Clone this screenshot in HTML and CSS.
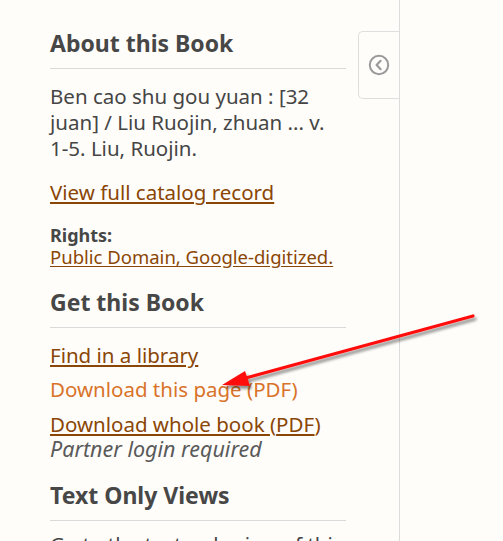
FILE: index.html
```html
<!DOCTYPE html>
<html>
<head>
<meta charset="utf-8">
<link rel="stylesheet" href="styles.css">
</head>
<body>
<div class="page">
  <aside class="sidebar">
    <div class="panel">
      <h2 class="heading">About this Book</h2>
      <p class="desc">Ben cao shu gou yuan : [32 juan] / Liu Ruojin, zhuan ... v. 1-5. Liu, Ruojin.</p>
      <p class="catalog"><a class="link" href="#">View full catalog record</a></p>
      <div class="rights">
        <div class="label">Rights:</div>
        <a class="link small" href="#">Public Domain, Google-digitized.</a>
      </div>
      <h2 class="heading">Get this Book</h2>
      <ul class="items">
        <li><a class="link" href="#">Find in a library</a></li>
        <li><a class="link active" href="#">Download this page (PDF)</a></li>
        <li><a class="link" href="#">Download whole book </a><span class="paren">(</span><a class="link" href="#">PDF</a><span class="paren">)</span>
          <div class="note">Partner login required</div></li>
      </ul>
      <h2 class="heading">Text Only Views</h2>
      <p class="desc views">Go to the text-only view of this item.</p>
    </div>
    <button class="toggle" type="button" aria-label="Collapse sidebar">
      <svg width="22" height="22" viewBox="0 0 22 22">
        <circle cx="11" cy="11" r="9.2" fill="none" stroke="#9a9a9a" stroke-width="2"/>
        <path d="M12.6 6.8 L8.6 11 L12.6 15.2" fill="none" stroke="#9a9a9a" stroke-width="2.2" stroke-linecap="round" stroke-linejoin="round"/>
      </svg>
    </button>
  </aside>
  <main class="main"></main>
  <svg class="arrow" width="503" height="541" viewBox="0 0 503 541">
    <defs>
      <filter id="sh" x="-10%" y="-10%" width="120%" height="130%">
        <feGaussianBlur in="SourceAlpha" stdDeviation="1.6"/>
        <feOffset dx="2" dy="3" result="b"/>
        <feComponentTransfer><feFuncA type="linear" slope="0.45"/></feComponentTransfer>
        <feMerge><feMergeNode/><feMergeNode in="SourceGraphic"/></feMerge>
      </filter>
    </defs>
    <g filter="url(#sh)">
      <line x1="473" y1="316" x2="242" y2="379" stroke="#ff1010" stroke-width="3.2" stroke-linecap="round"/>
      <path d="M222 385 L245 371 L250 386 Z" fill="#ff1010"/>
    </g>
  </svg>
</div>
</body>
</html>
```

FILE: styles.css
```css
html, body {
  margin: 0;
  padding: 0;
  background: #fefdfa;
}
body {
  font-family: "Noto Sans", "Open Sans", sans-serif;
  color: #444;
  width: 503px;
  height: 541px;
  overflow: hidden;
}
.page {
  position: relative;
  display: flex;
  height: 541px;
}
.sidebar {
  width: 349px;
  padding-left: 50px;
  border-right: 1px solid #dcdcdc;
  display: flex;
  align-items: flex-start;
  flex-shrink: 0;
}
.panel {
  width: 296px;
  padding-top: 28px;
}
.heading {
  margin: 0;
  font-size: 23px;
  font-weight: 700;
  color: #474747;
  line-height: 30px;
  padding-bottom: 10px;
  border-bottom: 1px solid #dadada;
}
.desc {
  margin: 14px 0 0;
  font-size: 20.5px;
  line-height: 26px;
  color: #454545;
}
.desc.views {
  margin-top: 10px;
}
.catalog {
  margin: 18px 0 0;
  font-size: 20.5px;
  line-height: 26px;
}
.link {
  color: #8a4606;
  text-decoration: underline;
  text-underline-offset: 2px;
}
.link.active {
  color: #d9732a;
  text-decoration: none;
}
.rights {
  margin-top: 20px;
  margin-bottom: 18px;
}
.label {
  font-size: 18px;
  font-weight: 700;
  line-height: 21px;
  color: #474747;
}
.small {
  font-size: 18.5px;
  line-height: 22px;
}
.items {
  list-style: none;
  margin: 14px 0 19px;
  padding: 0;
  font-size: 20.5px;
  line-height: 26px;
}
.items li + li {
  margin-top: 8px;
}
.items li:last-child {
  margin-top: 9px;
}
.paren {
  color: #8a4606;
}
.note {
  font-style: italic;
  font-size: 21.5px;
  color: #5a5a5a;
  line-height: 24px;
}
.toggle {
  margin: 31px 0 0 auto;
  width: 41px;
  height: 68px;
  padding: 0;
  border: 1px solid #dedede;
  border-right: none;
  border-radius: 5px 0 0 5px;
  background: #fefdfa;
  display: flex;
  align-items: center;
  justify-content: center;
}
.main {
  flex: 1;
}
.arrow {
  position: absolute;
  left: 0;
  top: 0;
  pointer-events: none;
}
```
